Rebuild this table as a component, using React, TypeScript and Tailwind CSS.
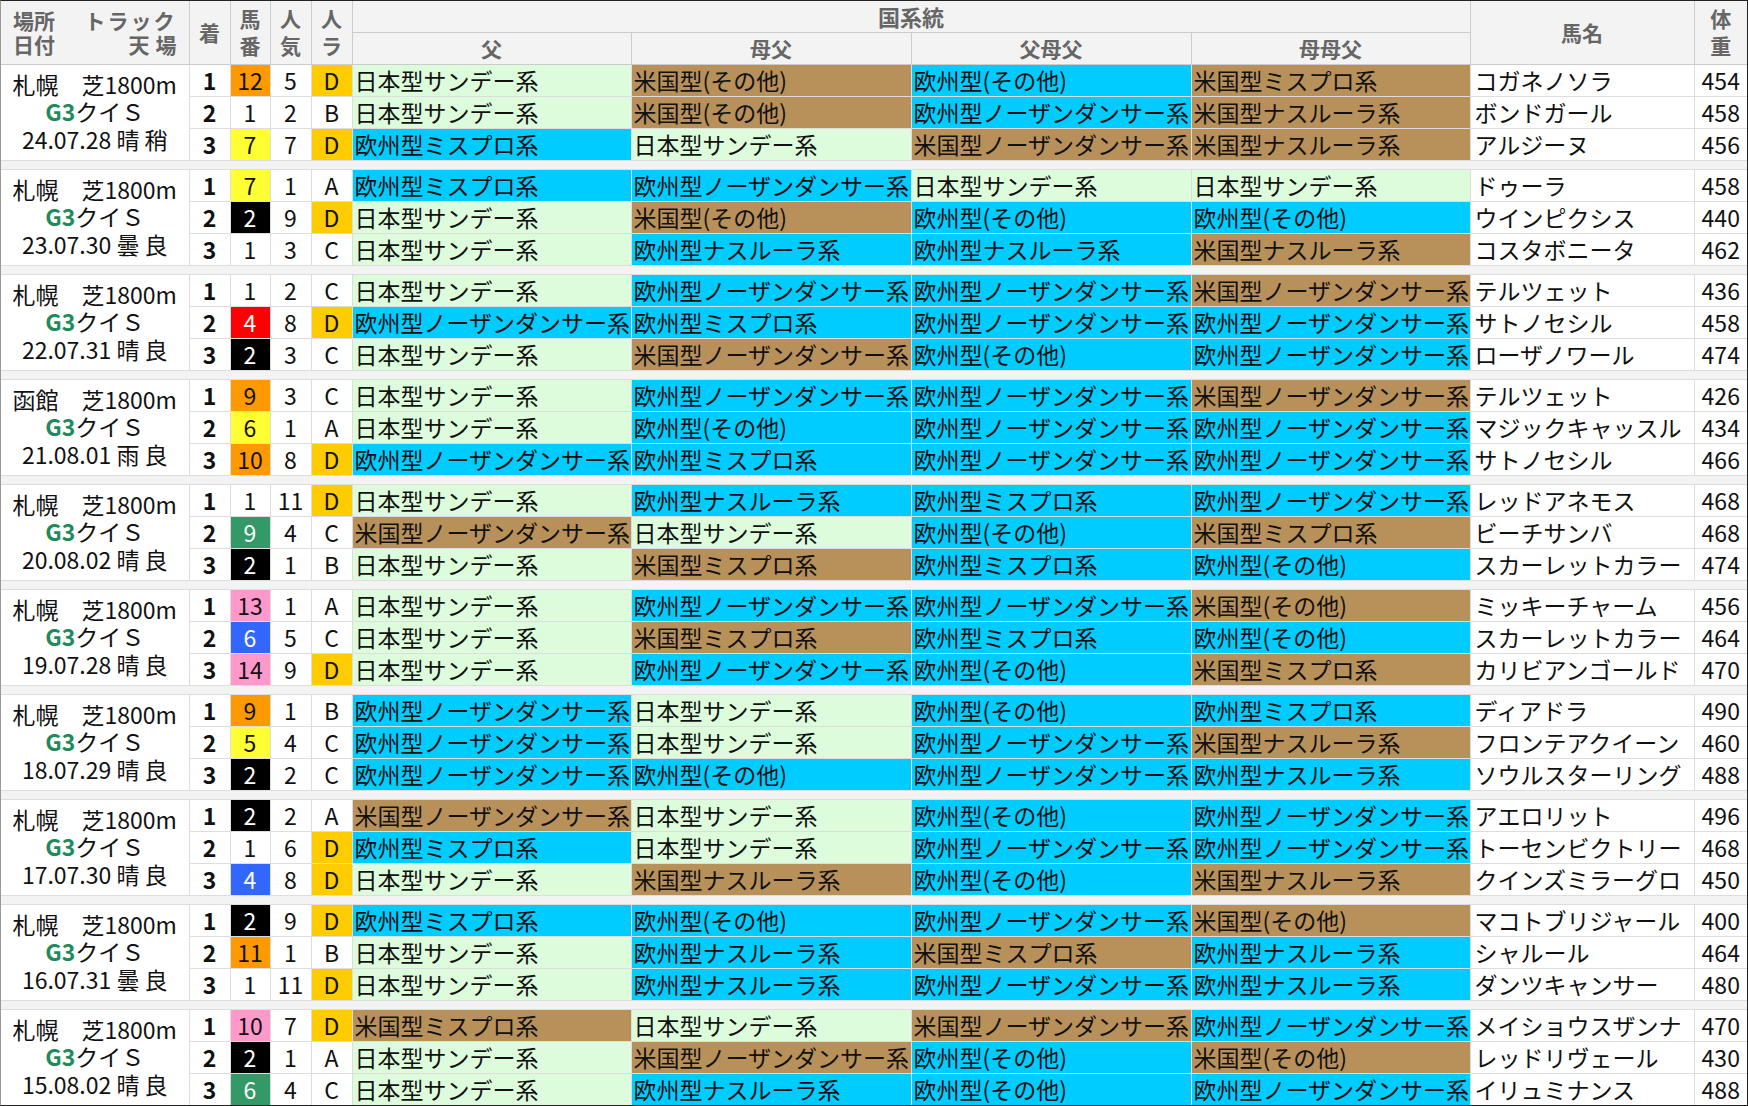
import React from 'react';

type Row = [number, string, number, string, string, string, string, string, string, number];
type Race = { place: string; date: string; rows: Row[] };

const races: Race[] = [
  {
    place: '札幌',
    date: '24.07.28 晴 稍',
    rows: [
      [12, 'o', 5, 'D', '日本型サンデー系', '米国型(その他)', '欧州型(その他)', '米国型ミスプロ系', 'コガネノソラ', 454],
      [1, 'w', 2, 'B', '日本型サンデー系', '米国型(その他)', '欧州型ノーザンダンサー系', '米国型ナスルーラ系', 'ボンドガール', 458],
      [7, 'y', 7, 'D', '欧州型ミスプロ系', '日本型サンデー系', '米国型ノーザンダンサー系', '米国型ナスルーラ系', 'アルジーヌ', 456],
    ],
  },
  {
    place: '札幌',
    date: '23.07.30 曇 良',
    rows: [
      [7, 'y', 1, 'A', '欧州型ミスプロ系', '欧州型ノーザンダンサー系', '日本型サンデー系', '日本型サンデー系', 'ドゥーラ', 458],
      [2, 'k', 9, 'D', '日本型サンデー系', '米国型(その他)', '欧州型(その他)', '欧州型(その他)', 'ウインピクシス', 440],
      [1, 'w', 3, 'C', '日本型サンデー系', '欧州型ナスルーラ系', '欧州型ナスルーラ系', '米国型ナスルーラ系', 'コスタボニータ', 462],
    ],
  },
  {
    place: '札幌',
    date: '22.07.31 晴 良',
    rows: [
      [1, 'w', 2, 'C', '日本型サンデー系', '欧州型ノーザンダンサー系', '欧州型ノーザンダンサー系', '米国型ノーザンダンサー系', 'テルツェット', 436],
      [4, 'r', 8, 'D', '欧州型ノーザンダンサー系', '欧州型ミスプロ系', '欧州型ノーザンダンサー系', '欧州型ノーザンダンサー系', 'サトノセシル', 458],
      [2, 'k', 3, 'C', '日本型サンデー系', '米国型ノーザンダンサー系', '欧州型(その他)', '欧州型ノーザンダンサー系', 'ローザノワール', 474],
    ],
  },
  {
    place: '函館',
    date: '21.08.01 雨 良',
    rows: [
      [9, 'o', 3, 'C', '日本型サンデー系', '欧州型ノーザンダンサー系', '欧州型ノーザンダンサー系', '米国型ノーザンダンサー系', 'テルツェット', 426],
      [6, 'y', 1, 'A', '日本型サンデー系', '欧州型(その他)', '欧州型ノーザンダンサー系', '欧州型ノーザンダンサー系', 'マジックキャッスル', 434],
      [10, 'o', 8, 'D', '欧州型ノーザンダンサー系', '欧州型ミスプロ系', '欧州型ノーザンダンサー系', '欧州型ノーザンダンサー系', 'サトノセシル', 466],
    ],
  },
  {
    place: '札幌',
    date: '20.08.02 晴 良',
    rows: [
      [1, 'w', 11, 'D', '日本型サンデー系', '欧州型ナスルーラ系', '欧州型ミスプロ系', '欧州型ノーザンダンサー系', 'レッドアネモス', 468],
      [9, 'g', 4, 'C', '米国型ノーザンダンサー系', '日本型サンデー系', '欧州型(その他)', '米国型ミスプロ系', 'ビーチサンバ', 468],
      [2, 'k', 1, 'B', '日本型サンデー系', '米国型ミスプロ系', '欧州型ミスプロ系', '欧州型(その他)', 'スカーレットカラー', 474],
    ],
  },
  {
    place: '札幌',
    date: '19.07.28 晴 良',
    rows: [
      [13, 'p', 1, 'A', '日本型サンデー系', '欧州型ノーザンダンサー系', '欧州型ノーザンダンサー系', '米国型(その他)', 'ミッキーチャーム', 456],
      [6, 'b', 5, 'C', '日本型サンデー系', '米国型ミスプロ系', '欧州型ミスプロ系', '欧州型(その他)', 'スカーレットカラー', 464],
      [14, 'p', 9, 'D', '日本型サンデー系', '欧州型ノーザンダンサー系', '欧州型(その他)', '米国型ミスプロ系', 'カリビアンゴールド', 470],
    ],
  },
  {
    place: '札幌',
    date: '18.07.29 晴 良',
    rows: [
      [9, 'o', 1, 'B', '欧州型ノーザンダンサー系', '日本型サンデー系', '欧州型(その他)', '欧州型ミスプロ系', 'ディアドラ', 490],
      [5, 'y', 4, 'C', '欧州型ノーザンダンサー系', '日本型サンデー系', '欧州型ノーザンダンサー系', '米国型ナスルーラ系', 'フロンテアクイーン', 460],
      [2, 'k', 2, 'C', '欧州型ノーザンダンサー系', '欧州型(その他)', '欧州型ノーザンダンサー系', '欧州型ナスルーラ系', 'ソウルスターリング', 488],
    ],
  },
  {
    place: '札幌',
    date: '17.07.30 晴 良',
    rows: [
      [2, 'k', 2, 'A', '米国型ノーザンダンサー系', '日本型サンデー系', '欧州型(その他)', '欧州型ノーザンダンサー系', 'アエロリット', 496],
      [1, 'w', 6, 'D', '欧州型ミスプロ系', '日本型サンデー系', '欧州型ノーザンダンサー系', '欧州型ノーザンダンサー系', 'トーセンビクトリー', 468],
      [4, 'b', 8, 'D', '日本型サンデー系', '米国型ナスルーラ系', '欧州型(その他)', '米国型ナスルーラ系', 'クインズミラーグロ', 450],
    ],
  },
  {
    place: '札幌',
    date: '16.07.31 曇 良',
    rows: [
      [2, 'k', 9, 'D', '欧州型ミスプロ系', '欧州型(その他)', '欧州型ノーザンダンサー系', '米国型(その他)', 'マコトブリジャール', 400],
      [11, 'o', 1, 'B', '日本型サンデー系', '欧州型ナスルーラ系', '米国型ミスプロ系', '欧州型ナスルーラ系', 'シャルール', 464],
      [1, 'w', 11, 'D', '日本型サンデー系', '欧州型ナスルーラ系', '欧州型ノーザンダンサー系', '欧州型ナスルーラ系', 'ダンツキャンサー', 480],
    ],
  },
  {
    place: '札幌',
    date: '15.08.02 晴 良',
    rows: [
      [10, 'p', 7, 'D', '米国型ミスプロ系', '日本型サンデー系', '米国型ノーザンダンサー系', '欧州型ノーザンダンサー系', 'メイショウスザンナ', 470],
      [2, 'k', 1, 'A', '日本型サンデー系', '米国型ノーザンダンサー系', '欧州型(その他)', '米国型(その他)', 'レッドリヴェール', 430],
      [6, 'g', 4, 'C', '日本型サンデー系', '欧州型ナスルーラ系', '欧州型(その他)', '欧州型ノーザンダンサー系', 'イリュミナンス', 488],
    ],
  },
];

const frameColor: Record<string, string> = {
  w: 'bg-white',
  k: 'bg-black text-white',
  r: 'bg-[#ff0000] text-white',
  b: 'bg-[#3366ff] text-white',
  y: 'bg-[#ffff33]',
  g: 'bg-[#339966] text-white',
  o: 'bg-[#ff9900]',
  p: 'bg-[#ff99cc]',
};

function pedColor(s: string) {
  if (s.startsWith('日本')) return 'bg-[#dcfcdc]';
  if (s.startsWith('欧州')) return 'bg-[#00ccff]';
  return 'bg-[#b8905a]';
}

const td = 'border border-[#dddddd] p-0';
const th = 'border border-[#cccccc] bg-[#f3f3f3] p-0 font-bold text-[#666666] text-[21px]';

// two stacked header characters (馬/番, 人/気 ...)
function Stack({ a, b }: { a: string; b: string }) {
  return (
    <div className="flex flex-col items-center gap-[6px] leading-[21px]">
      <span>{a}</span>
      <span>{b}</span>
    </div>
  );
}

export default function App() {
  return (
    <div
      className="w-[1748px] h-[1106px] overflow-hidden bg-white border border-[#222222] border-l-[#999999] text-[#111111]"
      style={{ fontFamily: '"Noto Sans CJK JP", "Noto Sans", sans-serif' }}
    >
      <table className="w-full table-fixed border-collapse text-[23px] leading-none">
        <colgroup>
          <col className="w-[188px]" />
          <col className="w-[41px]" />
          <col className="w-[40px]" />
          <col className="w-[41px]" />
          <col className="w-[41px]" />
          <col className="w-[279px]" />
          <col className="w-[280px]" />
          <col className="w-[280px]" />
          <col className="w-[279px]" />
          <col className="w-[224px]" />
          <col />
        </colgroup>
        <thead>
          <tr className="h-[31px]">
            <th rowSpan={2} className={th + ' border-t-0 border-l-0 px-[12px]'}>
              <div className="flex flex-col gap-[3px] leading-[21px]">
                <div className="flex justify-between">
                  <span>場所</span>
                  <span className="tracking-[2px]">トラック</span>
                </div>
                <div className="flex justify-between">
                  <span>日付</span>
                  <span className="tracking-[6px] -mr-[6px]">天場</span>
                </div>
              </div>
            </th>
            <th rowSpan={2} className={th + ' border-t-0'}>着</th>
            <th rowSpan={2} className={th + ' border-t-0'}>
              <Stack a="馬" b="番" />
            </th>
            <th rowSpan={2} className={th + ' border-t-0'}>
              <Stack a="人" b="気" />
            </th>
            <th rowSpan={2} className={th + ' border-t-0'}>
              <Stack a="人" b="ラ" />
            </th>
            <th colSpan={4} className={th + ' border-t-0 leading-none text-[22px]'}>国系統</th>
            <th rowSpan={2} className={th + ' border-t-0'}>馬名</th>
            <th rowSpan={2} className={th + ' border-t-0 border-r-0'}>
              <Stack a="体" b="重" />
            </th>
          </tr>
          <tr className="h-[32px]">
            <th className={th + ' leading-none'}>父</th>
            <th className={th + ' leading-none'}>母父</th>
            <th className={th + ' leading-none'}>父母父</th>
            <th className={th + ' leading-none'}>母母父</th>
          </tr>
        </thead>
        <tbody>
          {races.map((race, ri) => (
            <React.Fragment key={ri}>
              {ri > 0 && (
                <tr className="h-[9px]">
                  <td colSpan={11} className="border-y border-[#dddddd] bg-[#f3f3f3] p-0" />
                </tr>
              )}
              {race.rows.map((r, i) => (
                <tr key={i} className="h-[32px]">
                  {i === 0 && (
                    <td rowSpan={3} className={td + ' border-l-0 bg-white text-center text-[23px] leading-[27.5px]'}>
                      <div>{race.place}　芝1800m</div>
                      <div>
                        <span className="font-bold text-[#1e8c5a]">G3</span>クイＳ
                      </div>
                      <div>{race.date}</div>
                    </td>
                  )}
                  <td className={td + ' text-center font-bold'}>{i + 1}</td>
                  <td className={td + ' text-center ' + frameColor[r[1]]}>{r[0]}</td>
                  <td className={td + ' text-center'}>{r[2]}</td>
                  <td className={td + ' text-center ' + (r[3] === 'D' ? 'bg-[#ffcc00]' : '')}>{r[3]}</td>
                  {[r[4], r[5], r[6], r[7]].map((p, k) => (
                    <td key={k} className={td + ' pl-[2px] whitespace-nowrap overflow-hidden ' + pedColor(p)}>
                      {p}
                    </td>
                  ))}
                  <td className={td + ' pl-[4px] whitespace-nowrap overflow-hidden'}>{r[8]}</td>
                  <td className={td + ' border-r-0 text-center'}>{r[9]}</td>
                </tr>
              ))}
            </React.Fragment>
          ))}
        </tbody>
      </table>
    </div>
  );
}
